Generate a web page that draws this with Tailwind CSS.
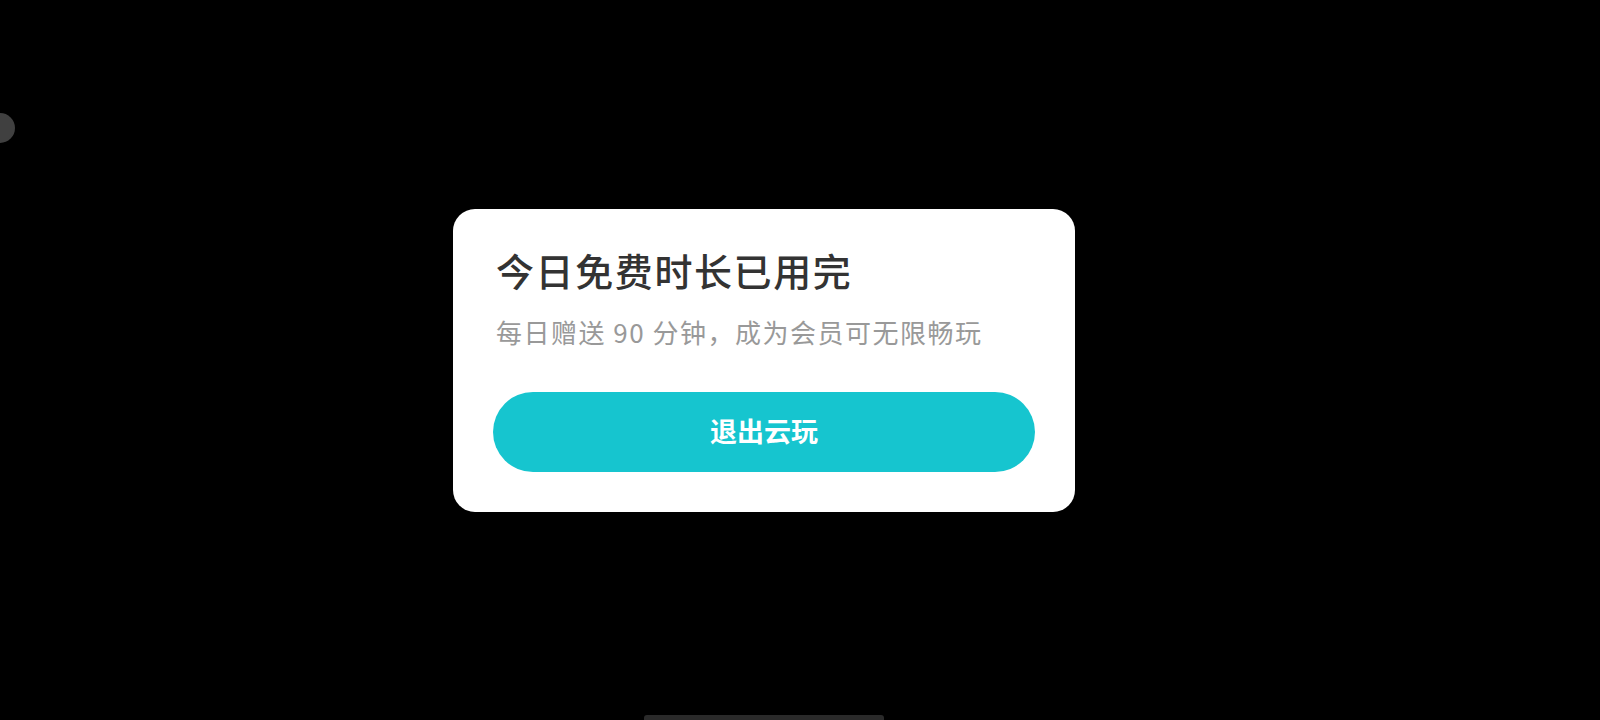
<!DOCTYPE html>
<html lang="zh-CN">
<head>
  <meta charset="UTF-8" />
  <meta name="viewport" content="width=device-width, initial-scale=1" />
  <title>今日免费时长已用完</title>
  <script src="https://cdn.jsdelivr.net/npm/@tailwindcss/browser@4"></script>
</head>
<body class="relative h-screen overflow-hidden bg-black font-['Noto_Sans_CJK_SC','Noto_Sans',sans-serif]">

  <!-- floating handle, mostly off the left edge -->
  <div class="absolute left-[-15px] top-[113px] h-[30px] w-[30px] rounded-full bg-[#404040]"></div>

  <div class="flex h-full w-[1528px] flex-col items-center">
    <div class="flex flex-1 items-center justify-center pt-[5px]">
      <div class="w-[622px] rounded-[22px] bg-white px-10 pb-10 pt-[35px]">
        <h1 class="pl-[3px] text-[38px] font-medium leading-[52px] tracking-[1.6px] text-[#333333]">今日免费时长已用完</h1>
        <p class="mt-[18px] pl-[3px] text-[26px] leading-[36px] tracking-[1.5px] text-[#999999]">每日赠送 90 分钟，成为会员可无限畅玩</p>
        <button class="mt-[42px] flex h-[80px] w-full items-center justify-center rounded-full bg-[#16c5cf] text-[27px] font-bold text-white">退出云玩</button>
      </div>
    </div>
    <!-- gesture bar -->
    <div class="h-[5px] w-[240px] rounded-t-[3px] bg-[#2a2a2a]"></div>
  </div>

</body>
</html>
